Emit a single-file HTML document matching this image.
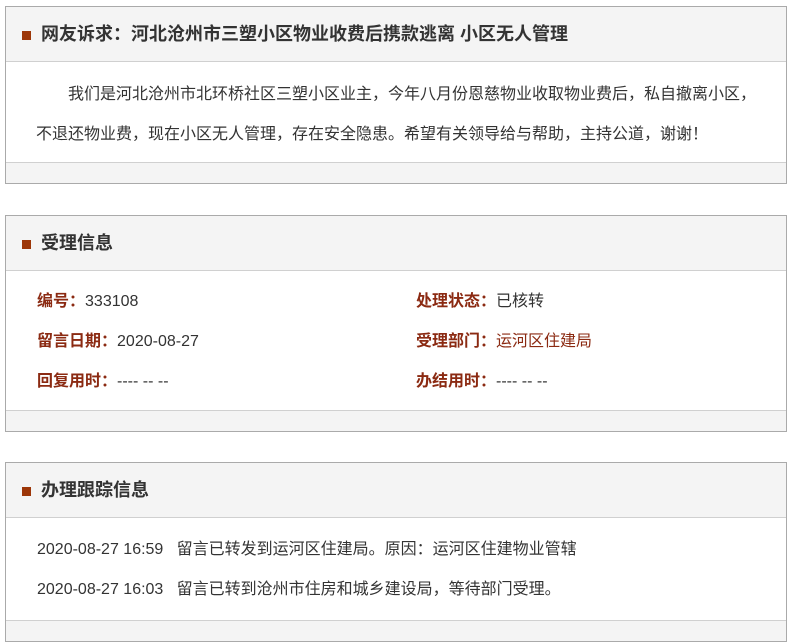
<!DOCTYPE html>
<html><head><meta charset="utf-8"><style>
*{margin:0;padding:0;box-sizing:border-box}
body{width:793px;height:625px;overflow:hidden;background:#fff;font-family:"Liberation Sans","Noto Sans CJK SC",sans-serif;color:#333}
.box{position:absolute;left:5px;width:782px;border:1px solid #aaa;background:#fff}
.hd{height:55px;background:#f4f4f4;border-bottom:1px solid #d0d0d0;position:relative;font-size:18px;font-weight:bold;color:#333;line-height:55px;padding-left:35px}
.hd:before{content:"";position:absolute;left:16px;top:24px;width:9px;height:9px;background:#9c3608}
.ft{height:21px;background:#f4f4f4;border-top:1px solid #d0d0d0}
.p{font-size:16px;line-height:40px;padding:13px 20px 0 30px;height:100px;text-indent:2em}
.row{position:absolute;font-size:16px}
.l{color:#8b2a12;font-weight:bold}
</style></head><body>
<div class="box" style="top:6px;height:178px">
<div class="hd">网友诉求：河北沧州市三塑小区物业收费后携款逃离 小区无人管理</div>
<div class="p">我们是河北沧州市北环桥社区三塑小区业主，今年八月份恩慈物业收取物业费后，私自撤离小区，不退还物业费，现在小区无人管理，存在安全隐患。希望有关领导给与帮助，主持公道，谢谢！</div>
<div class="ft"></div>
</div>
<div class="box" style="top:215px;height:217px">
<div class="hd">受理信息</div>
<div style="height:139px;position:relative">
<div class="row" style="left:31px;top:16px"><span class="l">编号：</span>333108</div>
<div class="row" style="left:31px;top:56px"><span class="l">留言日期：</span>2020-08-27</div>
<div class="row" style="left:31px;top:96px"><span class="l">回复用时：</span>---- -- --</div>
<div class="row" style="left:410px;top:16px"><span class="l">处理状态：</span>已核转</div>
<div class="row" style="left:410px;top:56px"><span class="l">受理部门：</span><span style="color:#8b2a12">运河区住建局</span></div>
<div class="row" style="left:410px;top:96px"><span class="l">办结用时：</span>---- -- --</div>
</div>
<div class="ft"></div>
</div>
<div class="box" style="top:462px;height:180px">
<div class="hd">办理跟踪信息</div>
<div style="height:102px;position:relative">
<div class="row" style="left:31px;top:17px">2020-08-27 16:59&nbsp;&nbsp;&nbsp;留言已转发到运河区住建局。原因：运河区住建物业管辖</div>
<div class="row" style="left:31px;top:57px">2020-08-27 16:03&nbsp;&nbsp;&nbsp;留言已转到沧州市住房和城乡建设局，等待部门受理。</div>
</div>
<div class="ft"></div>
</div>
</body></html>
